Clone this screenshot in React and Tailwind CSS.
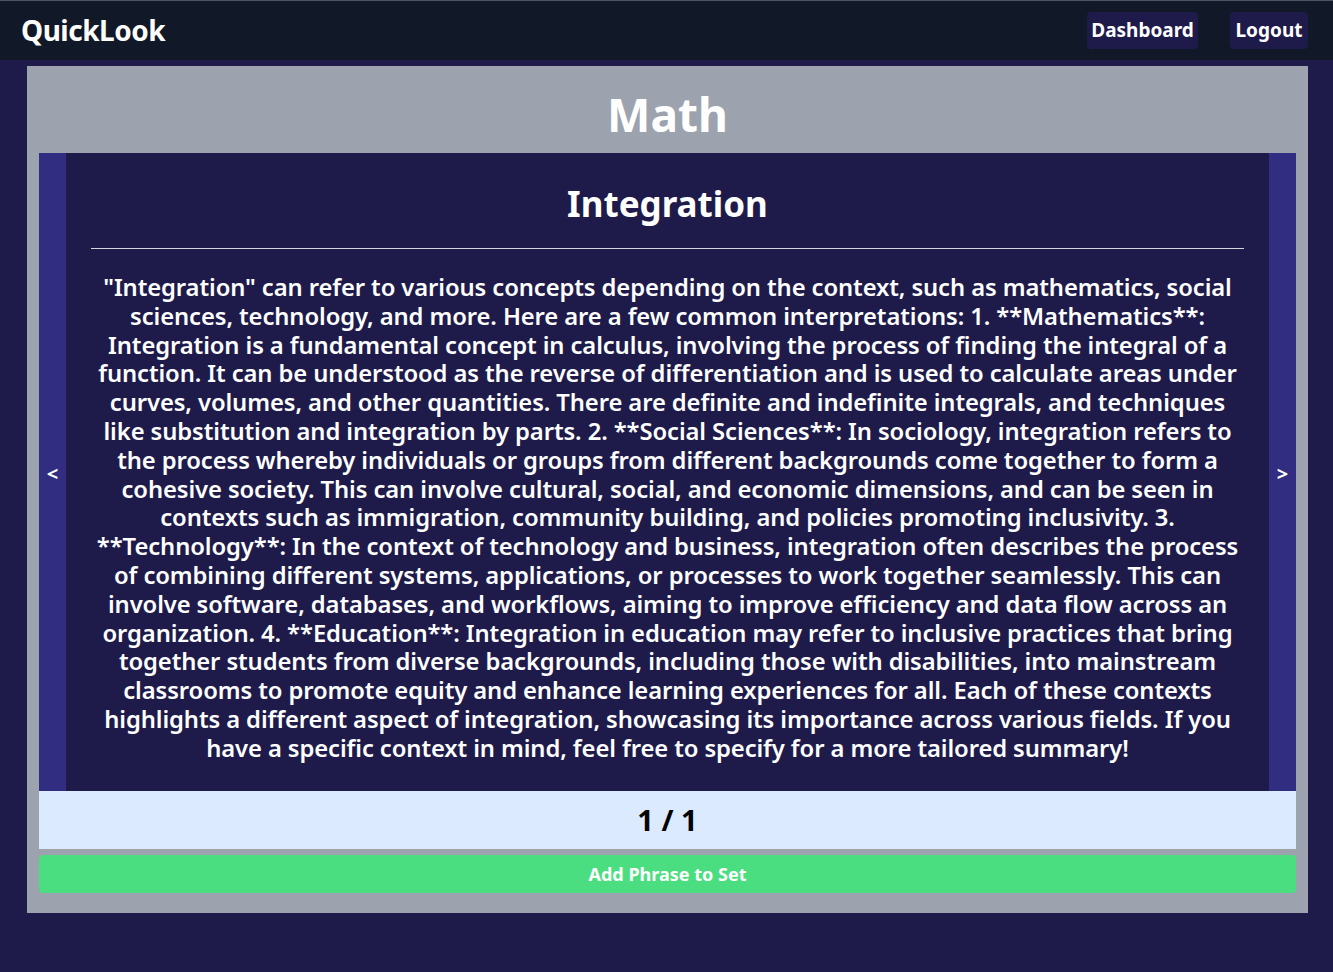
const text =
  '"Integration" can refer to various concepts depending on the context, such as mathematics, social sciences, technology, and more. Here are a few common interpretations: 1. **Mathematics**: Integration is a fundamental concept in calculus, involving the process of finding the integral of a function. It can be understood as the reverse of differentiation and is used to calculate areas under curves, volumes, and other quantities. There are definite and indefinite integrals, and techniques like substitution and integration by parts. 2. **Social Sciences**: In sociology, integration refers to the process whereby individuals or groups from different backgrounds come together to form a cohesive society. This can involve cultural, social, and economic dimensions, and can be seen in contexts such as immigration, community building, and policies promoting inclusivity. 3. **Technology**: In the context of technology and business, integration often describes the process of combining different systems, applications, or processes to work together seamlessly. This can involve software, databases, and workflows, aiming to improve efficiency and data flow across an organization. 4. **Education**: Integration in education may refer to inclusive practices that bring together students from diverse backgrounds, including those with disabilities, into mainstream classrooms to promote equity and enhance learning experiences for all. Each of these contexts highlights a different aspect of integration, showcasing its importance across various fields. If you have a specific context in mind, feel free to specify for a more tailored summary!';

const App = () => {
  return (
    <div className="min-h-[972px] bg-[#1e1b4b] font-['Noto_Sans',sans-serif]">
      {/* Top bar */}
      <header className="h-[60px] bg-[#111827] border-t border-gray-600 flex items-center justify-between pl-[21px] pr-[25px]">
        <h1 className="text-[28px] font-bold text-white tracking-[-0.5px] -mt-[2px]">QuickLook</h1>
        <div className="flex gap-8">
          <button className="h-[37px] w-[111px] bg-[#1e1b4b] rounded text-white text-[19px] font-bold">
            Dashboard
          </button>
          <button className="h-[37px] w-[78px] bg-[#1e1b4b] rounded text-white text-[19px] font-bold">
            Logout
          </button>
        </div>
      </header>

      <main className="pl-[27px] pr-[25px] pt-[6px]">
        <div className="bg-[#9ca3af] px-3 pb-5">
          <div className="h-[87px] pt-[10px] flex items-center justify-center">
            <h2 className="text-[46px] font-bold text-white">Math</h2>
          </div>

          {/* Card carousel */}
          <div className="flex">
            <button className="w-[27px] pt-[4px] bg-[#312e81] text-white text-[20px] font-bold">&lt;</button>
            <div className="flex-1 bg-[#1e1b4b] px-[25px] pt-[31px] pb-[28px] text-white text-center">
              <h3 className="text-[35px] font-bold leading-[40px]">Integration</h3>
              <hr className="mt-[24px] border-gray-300" />
              <p className="mt-[24px] text-[23.8px] font-semibold leading-[28.8px] tracking-[-0.1px]">{text}</p>
            </div>
            <button className="w-[27px] pt-[4px] bg-[#312e81] text-white text-[20px] font-bold">&gt;</button>
          </div>

          <div className="h-[58px] bg-[#dbeafe] flex items-center justify-center">
            <span className="text-[29px] font-bold text-black">1 / 1</span>
          </div>

          <button className="mt-[6px] w-full h-[38px] bg-[#4ade80] rounded text-white text-lg font-bold">
            Add Phrase to Set
          </button>
        </div>
      </main>
    </div>
  );
};

export default App;
